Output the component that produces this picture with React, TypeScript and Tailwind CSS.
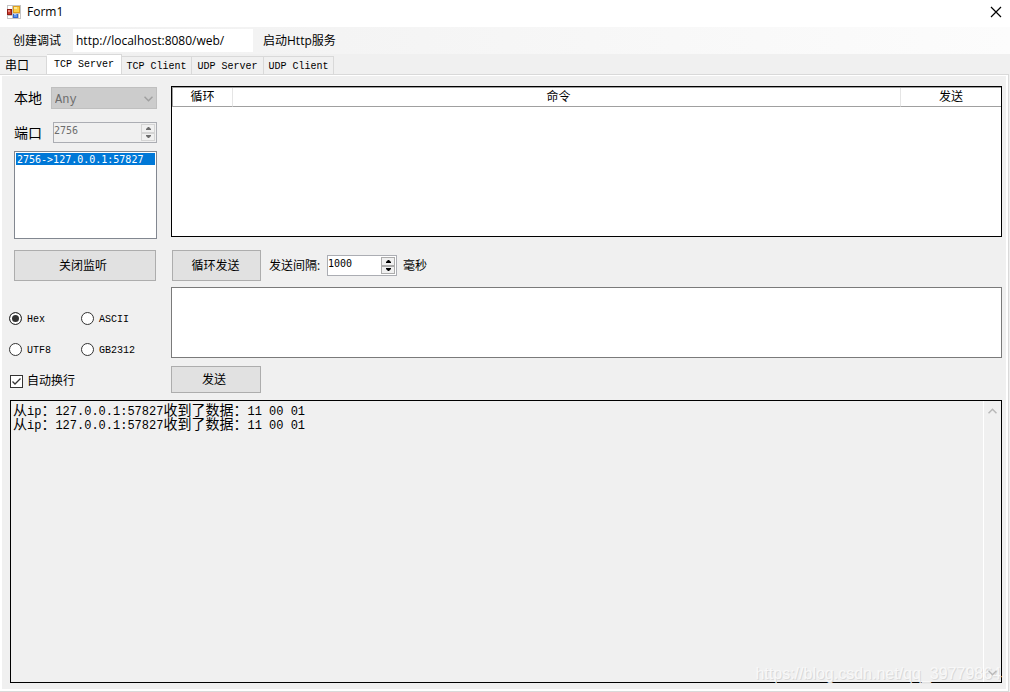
import { useState } from "react";

const tabs = [
  { label: "串口", width: "w-[47px]" },
  { label: "TCP Server", width: "w-[75px]" },
  { label: "TCP Client", width: "w-[70px]" },
  { label: "UDP Server", width: "w-[72px]" },
  { label: "UDP Client", width: "w-[70px]" },
];

const encodings = ["Hex", "ASCII", "UTF8", "GB2312"];

const messages = [
  { ip: "127.0.0.1:57827", data: "11 00 01" },
  { ip: "127.0.0.1:57827", data: "11 00 01" },
];

const mono = "font-['Liberation_Mono','Noto_Sans_CJK_SC',monospace]";
const button = "border border-[#adadad] bg-[#e1e1e1] hover:border-[#0078d7] hover:bg-[#e5f1fb]";

function FormIcon() {
  return (
    <svg width="14" height="14" viewBox="0 0 14 14" shapeRendering="crispEdges" aria-hidden="true">
      <rect x="0" y="0" width="14" height="14" fill="#c4c4c4" />
      <rect x="1" y="1" width="4" height="3" fill="#ffffff" />
      <rect x="1" y="11" width="4" height="2" fill="#ffffff" />
      <rect x="12" y="9" width="1" height="4" fill="#ffffff" />
      <rect x="6" y="1" width="7" height="7" fill="#e0a020" />
      <rect x="7" y="2" width="5" height="5" fill="#fbd04a" />
      <rect x="7" y="2" width="3" height="2" fill="#fde997" />
      <rect x="0" y="4" width="5" height="6" fill="#8f1d14" />
      <rect x="1" y="5" width="3" height="4" fill="#cc3a2c" />
      <rect x="1" y="5" width="2" height="2" fill="#e88a80" />
      <rect x="6" y="9" width="5" height="4" fill="#2f66cf" />
      <rect x="7" y="9" width="3" height="3" fill="#5f97ee" />
      <rect x="7" y="9" width="2" height="1" fill="#a9cbfa" />
    </svg>
  );
}

function Chevron({ down = false, className = "" }: { down?: boolean; className?: string }) {
  return (
    <svg width="9" height="6" viewBox="0 0 9 6" fill="none" stroke="currentColor" strokeWidth="1.5" className={className} aria-hidden="true">
      <path d={down ? "M0.5 0.8 4.5 4.8 8.5 0.8" : "M0.5 5.2 4.5 1.2 8.5 5.2"} />
    </svg>
  );
}

function Spinner({ id, start, disabled = false, className }: { id: string; start: number; disabled?: boolean; className: string }) {
  const [value, setValue] = useState(start);
  const arrow = `flex flex-1 items-center justify-center border bg-[#f0f0f0] ${disabled ? "border-[#d4d4d4]" : "border-[#acacac]"}`;

  return (
    <div className={`flex h-[21px] border border-[#abadb3] ${disabled ? "bg-[#f0f0f0] text-[#6d6d6d]" : "bg-white text-black"} ${className}`}>
      <input
        id={id}
        inputMode="numeric"
        value={value}
        disabled={disabled}
        onChange={(e) => setValue(Number(e.target.value) || 0)}
        className="h-[15px] w-full min-w-0 flex-1 font-['DejaVu_Sans_Mono',monospace] text-[10px] outline-none"
      />
      <div className="my-px mr-px flex w-[14px] flex-col">
        <button type="button" aria-label="Up" disabled={disabled} onClick={() => setValue(value + 1)} className={arrow}>
          <svg width="5" height="3" viewBox="0 0 5 3" fill="currentColor" aria-hidden="true">
            <path d="M0 3V2L2 0H3L5 2V3z" />
          </svg>
        </button>
        <button type="button" aria-label="Down" disabled={disabled} onClick={() => setValue(value - 1)} className={arrow}>
          <svg width="5" height="3" viewBox="0 0 5 3" fill="currentColor" aria-hidden="true">
            <path d="M0 0V1L2 3H3L5 1V0z" />
          </svg>
        </button>
      </div>
    </div>
  );
}

export default function App() {
  const [tab, setTab] = useState("TCP Server");
  const [encoding, setEncoding] = useState("Hex");
  const [wrap, setWrap] = useState(true);

  return (
    <div className="flex min-h-screen flex-col bg-[#f0f0f0] font-['Open_Sans','Noto_Sans_CJK_SC',sans-serif] text-xs text-black">
      <header className="flex h-[27px] items-center bg-white pr-2 pb-1 pl-[7px]">
        <FormIcon />
        <h1 className="ml-[6px] flex-1 leading-6">Form1</h1>
        <button type="button" aria-label="Close">
          <svg width="12" height="12" viewBox="0 0 12 12" stroke="#000" strokeWidth="1.2" aria-hidden="true">
            <path d="M1 1 11 11M11 1 1 11" />
          </svg>
        </button>
      </header>

      <nav className="flex h-[27px] items-center bg-linear-to-r from-[#f0f0f0] to-[#fcfcfc]">
        <button type="button" className="ml-[13px] w-[60px] text-left">创建调试</button>
        <input
          aria-label="Http地址"
          defaultValue="http://localhost:8080/web/"
          className="h-[23px] w-[180px] bg-white px-[3px] outline-none"
        />
        <button type="button" className="ml-[10px]">启动Http服务</button>
      </nav>

      <div role="tablist" className={`flex h-5 items-end ${mono}`}>
        {tabs.map(({ label, width }) => {
          const selected = tab === label;
          return (
            <button
              key={label}
              type="button"
              role="tab"
              aria-selected={selected}
              onClick={() => setTab(label)}
              className={`border-t border-r border-[#d9d9d9] ${width} ${
                selected ? "h-5 bg-white" : "h-[18px] bg-[#f0f0f0] pt-0.5"
              } ${label === "串口" ? "pl-[5px] text-left text-xs leading-4" : "text-[10px] leading-4"}`}
            >
              {label}
            </button>
          );
        })}
      </div>

      <main role="tabpanel" aria-label={tab} className="mr-px flex flex-1 flex-col border-t border-r border-b border-[#d9d9d9] bg-white p-0.5 pt-px">
        <div className="flex flex-1 flex-col bg-[#f0f0f0] pt-[10px] pr-1 pb-[6px]">
          <div className="flex gap-[14px]">
            <section className="w-[155px] shrink-0">
              <div className="pt-px pl-3">
                <div className="flex h-[22px] items-center">
                  <label htmlFor="local" className="w-[37px] text-sm">本地</label>
                  <div className="relative h-full flex-1">
                    <select
                      id="local"
                      disabled
                      className={`h-full w-full appearance-none border border-[#bfbfbf] bg-[#cccccc] px-[3px] pt-[3px] text-xs text-[#6d6d6d] opacity-100 ${mono}`}
                    >
                      <option>Any</option>
                    </select>
                    <Chevron down className="absolute top-[9px] right-1 text-[#a0a0a0]" />
                  </div>
                </div>
                <div className="mt-[13px] flex h-[21px] items-center">
                  <label htmlFor="port" className="w-[39px] text-sm leading-4">端口</label>
                  <Spinner id="port" start={2756} disabled className="flex-1" />
                </div>
                <ul role="listbox" aria-label="连接" className="mt-2 h-[88px] border border-[#828790] bg-white p-px">
                  <li role="option" aria-selected="true" className="h-3 bg-[#0078d7] pl-px font-['DejaVu_Sans_Mono',monospace] text-[10px] leading-[13px] text-white">
                    2756-&gt;127.0.0.1:57827
                  </li>
                </ul>
                <button type="button" className={`mt-[11px] h-[31px] w-[142px] pr-1 ${button}`}>关闭监听</button>
              </div>

              <fieldset className={`mt-[22px] grid grid-cols-[72px_1fr] pl-[7px] text-[10px] ${mono}`}>
                {encodings.map((name) => (
                  <label key={name} className="flex h-[31px] items-center gap-[5px]">
                    <input
                      type="radio"
                      name="encoding"
                      checked={encoding === name}
                      onChange={() => setEncoding(name)}
                      className="size-[13px] appearance-none rounded-full border border-[#333333] bg-white checked:bg-[#333333] checked:shadow-[inset_0_0_0_2px_#ffffff]"
                    />
                    <span className="pt-0.5">{name}</span>
                  </label>
                ))}
              </fieldset>
              <label className="relative ml-2 flex h-8 w-fit items-center gap-1">
                <input
                  type="checkbox"
                  checked={wrap}
                  onChange={(e) => setWrap(e.target.checked)}
                  className="size-[13px] appearance-none border border-[#333333] bg-white"
                />
                {wrap && (
                  <svg width="13" height="13" viewBox="0 0 13 13" fill="none" stroke="#333333" strokeWidth="1.3" className="pointer-events-none absolute left-0" aria-hidden="true">
                    <path d="M2.5 6.5 5 9 10.5 3.5" />
                  </svg>
                )}
                自动换行
              </label>
            </section>

            <section className="flex min-w-0 flex-1 flex-col">
              <div className="h-[151px] border border-black bg-white">
                <table className="w-full table-fixed border-separate border-spacing-0 border-t border-l border-[#a0a0a0]">
                  <thead>
                    <tr>
                      <th scope="col" className="h-[19px] w-[60px] border-r border-b border-r-[#e5e5e5] border-b-[#a0a0a0] font-normal leading-4">循环</th>
                      <th scope="col" className="border-r border-b border-r-[#e5e5e5] border-b-[#a0a0a0] pr-4 font-normal leading-4">命令</th>
                      <th scope="col" className="w-[100px] border-b border-[#a0a0a0] font-normal leading-4">发送</th>
                    </tr>
                  </thead>
                </table>
              </div>

              <div className="mt-[13px] flex h-[31px] items-center pl-px">
                <button type="button" className={`h-full w-[89px] pr-0.5 ${button}`}>循环发送</button>
                <label htmlFor="interval" className="ml-2 w-[58px] whitespace-nowrap">发送间隔:</label>
                <Spinner id="interval" start={1000} className="w-[70px]" />
                <span className="ml-[6px]">毫秒</span>
              </div>

              <textarea aria-label="发送内容" className="mt-[6px] block h-[71px] w-full resize-none border border-[#7a7a7a] bg-white p-1 outline-none" />
              <button type="button" className={`mt-2 h-[27px] w-[90px] pr-1 ${button}`}>发送</button>
            </section>
          </div>

          <div className="relative mt-[3px] ml-2 flex flex-1 border border-black">
            <div role="log" className={`flex-1 px-0.5 pt-[3px] text-xs leading-[14px] ${mono}`}>
              {messages.map((message, i) => (
                <p key={i} className="h-[14px]">
                  <span className="text-sm leading-[14px]">从</span>ip<span className="text-sm leading-[14px]">：</span>
                  {message.ip}
                  <span className="text-sm leading-[14px]">收到了数据：</span>
                  {message.data}
                </p>
              ))}
            </div>
            <div className="z-10 flex w-[18px] flex-col items-center justify-between border-l border-white pt-[7px] pr-px pb-[6px] text-[#b8b8b8]">
              <button type="button" aria-label="Scroll up">
                <Chevron className="block" />
              </button>
              <button type="button" aria-label="Scroll down">
                <Chevron down className="block" />
              </button>
            </div>
            <p className="pointer-events-none absolute right-0 bottom-0 font-['Liberation_Sans',sans-serif] text-base leading-4 text-[#f8f8f8] [text-shadow:1px_1px_#d9d9d9]">
              https://blog.csdn.net/qq_39779864
            </p>
          </div>
        </div>
      </main>
    </div>
  );
}
